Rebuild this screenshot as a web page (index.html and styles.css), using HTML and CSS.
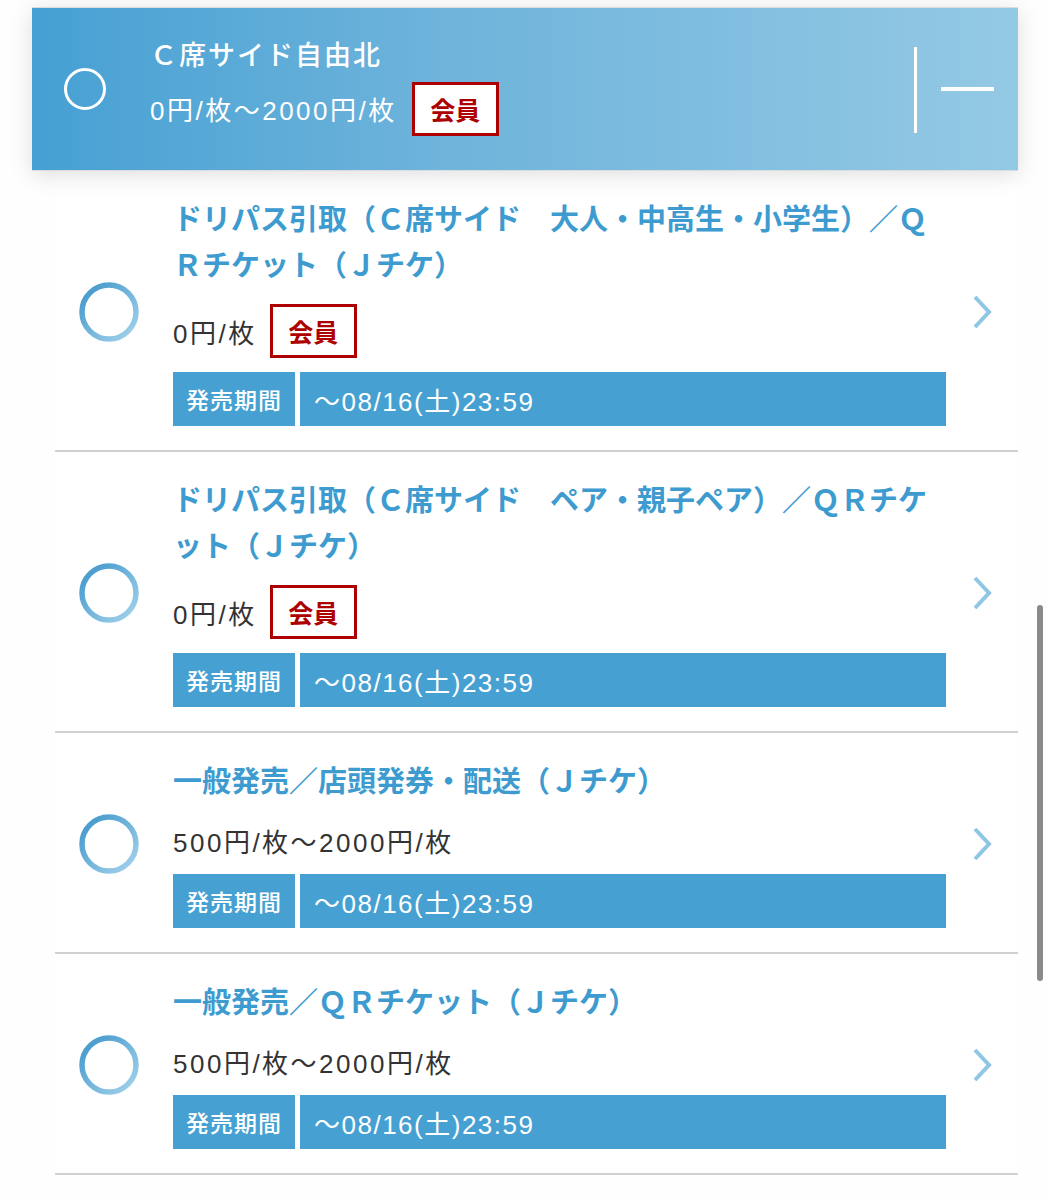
FILE: index.html
```html
<!DOCTYPE html>
<html lang="ja">
<head>
    <meta charset="UTF-8">
    <meta name="viewport" content="width=device-width, initial-scale=1.0">
    <title>席種選択</title>
    <link rel="stylesheet" href="styles.css">
</head>
<body>

<div class="page">
    <div class="seat-head">
        <svg class="head-radio" width="44" height="44" viewBox="0 0 44 44">
            <circle cx="22" cy="22" r="19.5" fill="none" stroke="#fff" stroke-width="3"/>
        </svg>
        <div class="head-info">
            <div class="head-title">Ｃ席サイド自由北</div>
            <div class="head-price">
                <span>0円/枚～2000円/枚</span>
                <span class="badge">会員</span>
            </div>
        </div>
        <div class="head-toggle">
            <span class="toggle-line"></span>
            <span class="toggle-dash"></span>
        </div>
    </div>

    <ul class="ticket-list">
        <li class="ticket">
            <div class="ticket-radio">
                <svg width="60" height="60" viewBox="0 0 60 60">
                    <defs>
                        <linearGradient id="rg1" x1="0" y1="0" x2="1" y2="1">
                            <stop offset="0" stop-color="#3d95ca"/>
                            <stop offset="1" stop-color="#a6d4ec"/>
                        </linearGradient>
                    </defs>
                    <circle cx="30" cy="30" r="27" fill="none" stroke="url(#rg1)" stroke-width="5.5"/>
                </svg>
            </div>
            <div class="ticket-body">
                <div class="ticket-title">ドリパス引取（Ｃ席サイド　大人・中高生・小学生）／ＱＲチケット（Ｊチケ）</div>
                <div class="ticket-price">
                    <span>0円/枚</span>
                    <span class="badge">会員</span>
                </div>
                <div class="period">
                    <span class="period-label">発売期間</span>
                    <span class="period-value">～08/16(土)23:59</span>
                </div>
            </div>
            <div class="ticket-arrow">
                <svg width="24" height="36" viewBox="0 0 24 36"><polyline points="5,3 19,18 5,33" fill="none" stroke="#8ec6e4" stroke-width="4"/></svg>
            </div>
        </li>
        <li class="ticket">
            <div class="ticket-radio">
                <svg width="60" height="60" viewBox="0 0 60 60">
                    <defs>
                        <linearGradient id="rg2" x1="0" y1="0" x2="1" y2="1">
                            <stop offset="0" stop-color="#3d95ca"/>
                            <stop offset="1" stop-color="#a6d4ec"/>
                        </linearGradient>
                    </defs>
                    <circle cx="30" cy="30" r="27" fill="none" stroke="url(#rg2)" stroke-width="5.5"/>
                </svg>
            </div>
            <div class="ticket-body">
                <div class="ticket-title">ドリパス引取（Ｃ席サイド　ペア・親子ペア）／ＱＲチケット（Ｊチケ）</div>
                <div class="ticket-price">
                    <span>0円/枚</span>
                    <span class="badge">会員</span>
                </div>
                <div class="period">
                    <span class="period-label">発売期間</span>
                    <span class="period-value">～08/16(土)23:59</span>
                </div>
            </div>
            <div class="ticket-arrow">
                <svg width="24" height="36" viewBox="0 0 24 36"><polyline points="5,3 19,18 5,33" fill="none" stroke="#8ec6e4" stroke-width="4"/></svg>
            </div>
        </li>
        <li class="ticket">
            <div class="ticket-radio">
                <svg width="60" height="60" viewBox="0 0 60 60">
                    <defs>
                        <linearGradient id="rg3" x1="0" y1="0" x2="1" y2="1">
                            <stop offset="0" stop-color="#3d95ca"/>
                            <stop offset="1" stop-color="#a6d4ec"/>
                        </linearGradient>
                    </defs>
                    <circle cx="30" cy="30" r="27" fill="none" stroke="url(#rg3)" stroke-width="5.5"/>
                </svg>
            </div>
            <div class="ticket-body">
                <div class="ticket-title">一般発売／店頭発券・配送（Ｊチケ）</div>
                <div class="ticket-price">
                    <span>500円/枚～2000円/枚</span>
                </div>
                <div class="period">
                    <span class="period-label">発売期間</span>
                    <span class="period-value">～08/16(土)23:59</span>
                </div>
            </div>
            <div class="ticket-arrow">
                <svg width="24" height="36" viewBox="0 0 24 36"><polyline points="5,3 19,18 5,33" fill="none" stroke="#8ec6e4" stroke-width="4"/></svg>
            </div>
        </li>
        <li class="ticket">
            <div class="ticket-radio">
                <svg width="60" height="60" viewBox="0 0 60 60">
                    <defs>
                        <linearGradient id="rg4" x1="0" y1="0" x2="1" y2="1">
                            <stop offset="0" stop-color="#3d95ca"/>
                            <stop offset="1" stop-color="#a6d4ec"/>
                        </linearGradient>
                    </defs>
                    <circle cx="30" cy="30" r="27" fill="none" stroke="url(#rg4)" stroke-width="5.5"/>
                </svg>
            </div>
            <div class="ticket-body">
                <div class="ticket-title">一般発売／ＱＲチケット（Ｊチケ）</div>
                <div class="ticket-price">
                    <span>500円/枚～2000円/枚</span>
                </div>
                <div class="period">
                    <span class="period-label">発売期間</span>
                    <span class="period-value">～08/16(土)23:59</span>
                </div>
            </div>
            <div class="ticket-arrow">
                <svg width="24" height="36" viewBox="0 0 24 36"><polyline points="5,3 19,18 5,33" fill="none" stroke="#8ec6e4" stroke-width="4"/></svg>
            </div>
        </li>
    </ul>
</div>

<div class="scrollbar"></div>

</body>
</html>
```

FILE: styles.css
```css
body {
    margin: 0;
    background-color: #fefefe;
    font-family: "Liberation Sans", "Noto Sans CJK JP", sans-serif;
    color: #333;
}
.page {
    padding: 7px 32px 0 32px;
}

/* 選択中の席種ヘッダー */
.seat-head {
    display: flex;
    align-items: center;
    height: 164px;
    box-sizing: border-box;
    padding: 0 0 0 31px;
    background: linear-gradient(90deg, #46a0d3 0%, #6db3db 40%, #94c9e4 100%);
    border-top: 1px solid #d9dde0;
    border-bottom: 1px solid #d9dde0;
    box-shadow: 0 4px 22px rgba(0,0,0,0.13);
    position: relative;
    z-index: 1;
}
.head-radio {
    flex: none;
}
.head-info {
    flex: 1;
    margin-left: 43px;
    color: #fff;
    padding-bottom: 7px;
}
.head-title {
    font-size: 27px;
    line-height: 40px;
    letter-spacing: 2px;
    font-weight: 500;
}
.head-price {
    display: flex;
    align-items: center;
    margin-top: 6px;
    font-size: 26px;
    letter-spacing: 2.5px;
    height: 53px;
}
.head-toggle {
    flex: none;
    display: flex;
    align-items: center;
    width: 104px;
    height: 100%;
}
.toggle-line {
    width: 3px;
    height: 86px;
    background: #fff;
    margin-top: 2px;
}
.toggle-dash {
    width: 53px;
    height: 4px;
    background: #fff;
    margin-left: 24px;
}

.badge {
    display: inline-flex;
    align-items: center;
    justify-content: center;
    width: 87px;
    height: 54px;
    box-sizing: border-box;
    margin-left: 15px;
    border: 3px solid #ad0000;
    background: #fff;
    color: #ad0000;
    font-size: 25px;
    letter-spacing: 0;
    font-weight: bold;
}

/* チケット一覧 */
.ticket-list {
    list-style: none;
    margin: 0 0 0 23px;
    padding: 0;
    background: #fff;
}
.ticket {
    display: flex;
    align-items: center;
    padding: 26px 0 24px 0;
    border-bottom: 2px solid #d0d0d0;
}
.ticket-radio {
    flex: none;
    width: 118px;
    padding-left: 24px;
    box-sizing: border-box;
    display: flex;
}
.ticket-body {
    flex: none;
    width: 773px;
}
.ticket-title {
    color: #3e9bcf;
    font-size: 29px;
    line-height: 46px;
    font-weight: bold;
}
.ticket-price {
    display: flex;
    align-items: center;
    margin: 15px 0 14px 0;
    min-height: 40px;
    font-size: 26px;
    letter-spacing: 2.5px;
    color: #333;
}
.ticket-price .badge {
    margin-left: 13px;
}
.period {
    display: flex;
    gap: 5px;
    height: 54px;
    color: #fff;
}
.period-label {
    display: flex;
    align-items: center;
    justify-content: center;
    width: 122px;
    background: #46a1d2;
    font-size: 23px;
    letter-spacing: 1px;
    font-weight: 500;
}
.period-value {
    flex: 1;
    display: flex;
    align-items: center;
    padding-left: 14px;
    background: #46a1d2;
    font-size: 26px;
    letter-spacing: 1.5px;
}
.ticket-arrow {
    flex: 1;
    display: flex;
    justify-content: center;
}

.scrollbar {
    position: fixed;
    top: 605px;
    right: 7px;
    width: 6px;
    height: 376px;
    border-radius: 3px;
    background: #8a8a8a;
}
```
